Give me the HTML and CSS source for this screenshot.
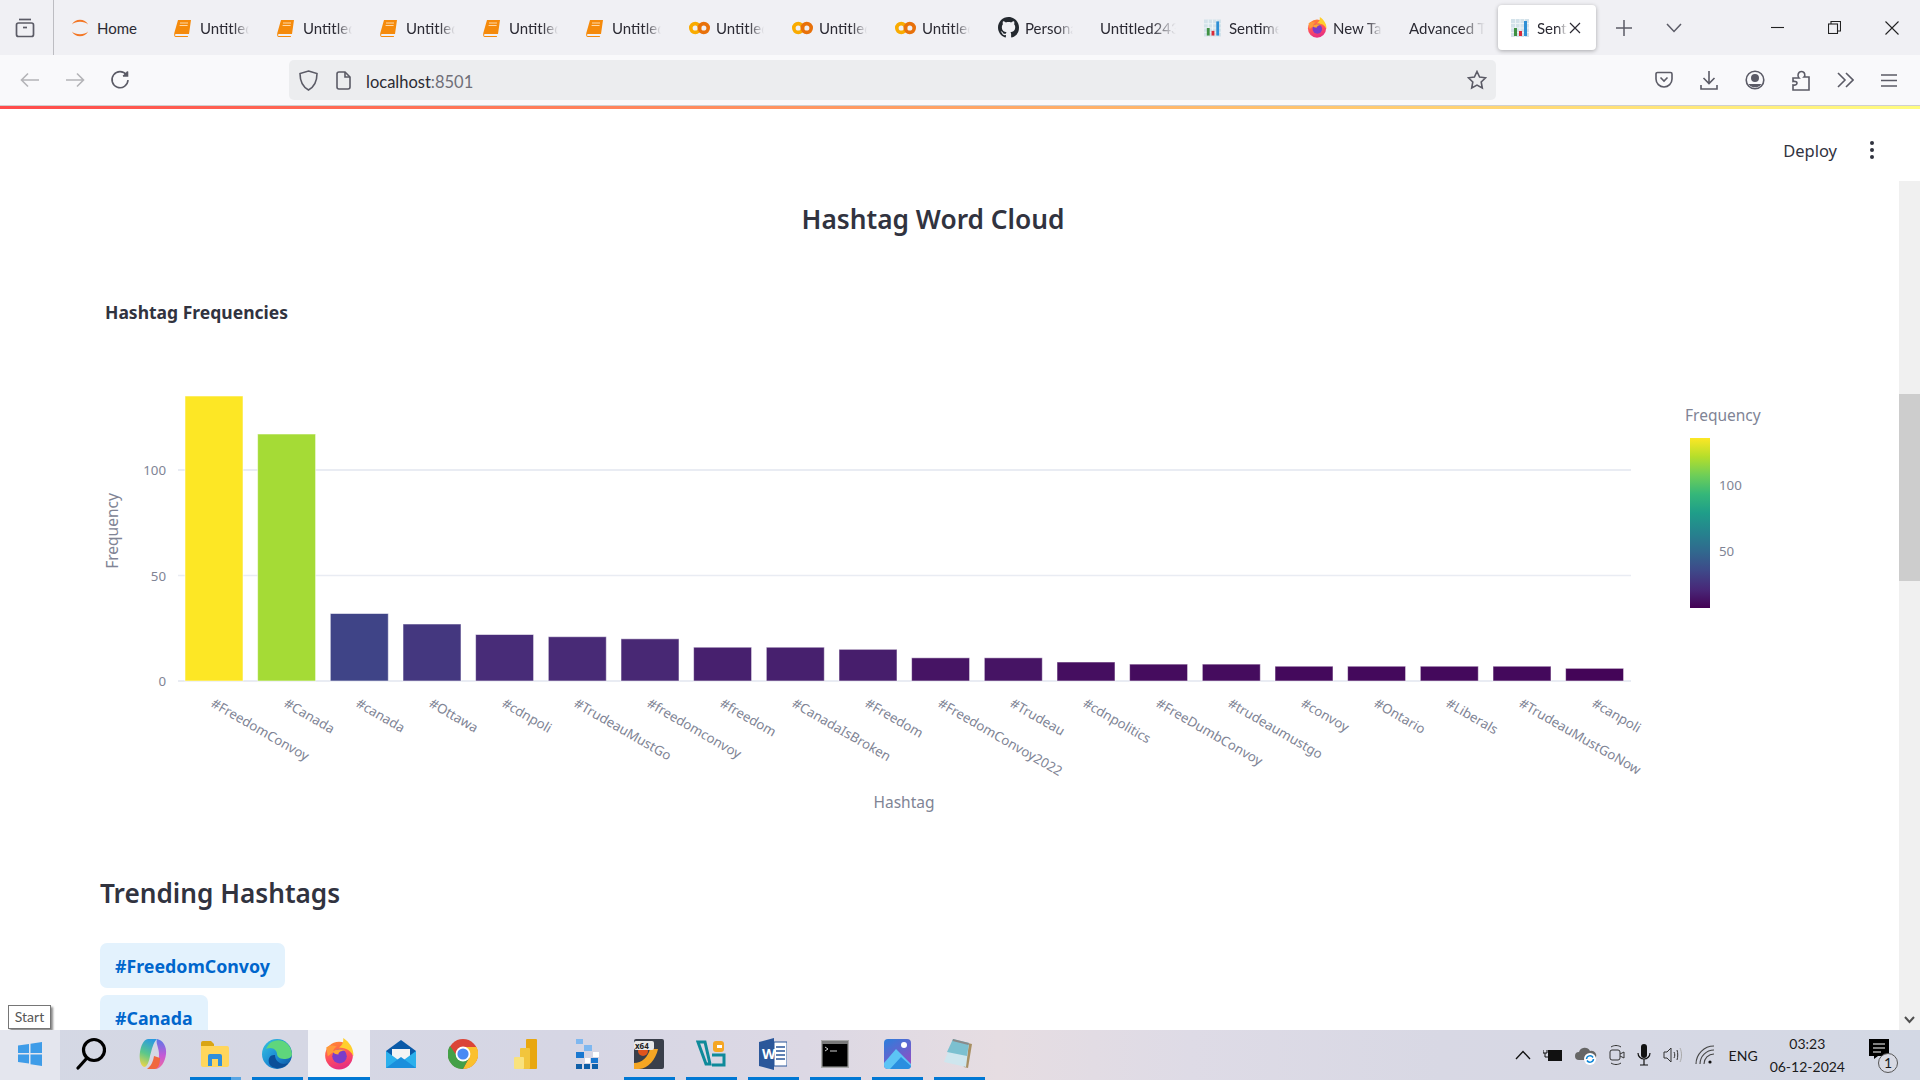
FILE: index.html
```html
<!DOCTYPE html>
<html lang="en">
<head>
    <meta charset="UTF-8">
    <title>Sentiment Dashboard</title>
    <link rel="stylesheet" href="styles.css">
</head>
<body>
    <svg class="sprite" xmlns="http://www.w3.org/2000/svg">
        <defs>
            <linearGradient id="viridis" x1="0" y1="1" x2="0" y2="0">
                <stop offset="0" stop-color="#440154"/>
                <stop offset="0.11" stop-color="#482878"/>
                <stop offset="0.22" stop-color="#3e4989"/>
                <stop offset="0.33" stop-color="#31688e"/>
                <stop offset="0.44" stop-color="#26828e"/>
                <stop offset="0.56" stop-color="#1f9e89"/>
                <stop offset="0.67" stop-color="#35b779"/>
                <stop offset="0.78" stop-color="#6ece58"/>
                <stop offset="0.89" stop-color="#b5de2b"/>
                <stop offset="1" stop-color="#fde725"/>
            </linearGradient>
            <linearGradient id="fxBody" x1="0" y1="0" x2="0.3" y2="1">
                <stop offset="0" stop-color="#ff8f2e"/>
                <stop offset="0.6" stop-color="#ff4f5e"/>
                <stop offset="1" stop-color="#e8307f"/>
            </linearGradient>
            <linearGradient id="edgeBody" x1="0" y1="0" x2="1" y2="1">
                <stop offset="0" stop-color="#36c5e0"/>
                <stop offset="0.55" stop-color="#1b8ad4"/>
                <stop offset="1" stop-color="#0c4f99"/>
            </linearGradient>
            <linearGradient id="copilotLeft" x1="0.6" y1="0" x2="0.3" y2="1">
                <stop offset="0" stop-color="#2a9ae0"/>
                <stop offset="0.55" stop-color="#5cc88a"/>
                <stop offset="1" stop-color="#e8d44a"/>
            </linearGradient>
            <linearGradient id="copilotRight" x1="0.5" y1="0" x2="0.5" y2="1">
                <stop offset="0" stop-color="#5a78e8"/>
                <stop offset="0.55" stop-color="#c45ad6"/>
                <stop offset="1" stop-color="#f0689e"/>
            </linearGradient>
            <linearGradient id="photoBody" x1="0" y1="0" x2="0.6" y2="1">
                <stop offset="0" stop-color="#2a7fdc"/>
                <stop offset="1" stop-color="#8f4fc4"/>
            </linearGradient>
        </defs>
        <symbol id="ic-home" viewBox="0 0 20 24">
            <path d="M1 8 C4 1 16 1 19 8 C15 4 5 4 1 8Z" fill="#f37726"/>
            <path d="M1 16 C4 23 16 23 19 16 C15 20 5 20 1 16Z" fill="#f37726"/>
        </symbol>
        <symbol id="ic-book" viewBox="0 0 18 18">
            <path d="M4 1 H17 L15 15 H2 C1 15 0.5 16 1.5 17 H14 L13.8 18 H2 C0 18 0 16 0.3 14Z" fill="#f58a0b"/>
            <path d="M6 4 H14 M5.6 6.5 H13.6" stroke="#ffd9a8" stroke-width="1"/>
        </symbol>
        <symbol id="ic-colab" viewBox="0 0 22 14">
            <circle cx="6.5" cy="7" r="4.6" fill="none" stroke="#f9ab00" stroke-width="3.8"/>
            <circle cx="15.5" cy="7" r="4.6" fill="none" stroke="#e8710a" stroke-width="3.8"/>
        </symbol>
        <symbol id="ic-github" viewBox="0 0 16 16">
            <path fill="#24292f" fill-rule="evenodd" d="M8 0C3.58 0 0 3.58 0 8c0 3.54 2.29 6.53 5.47 7.59.4.07.55-.17.55-.38 0-.19-.01-.82-.01-1.49-2.01.37-2.53-.49-2.69-.94-.09-.23-.48-.94-.82-1.13-.28-.15-.68-.52-.01-.53.63-.01 1.08.58 1.23.82.72 1.21 1.87.87 2.33.66.07-.52.28-.87.51-1.07-1.78-.2-3.64-.89-3.64-3.95 0-.87.31-1.59.82-2.15-.08-.2-.36-1.02.08-2.12 0 0 .67-.21 2.2.82.64-.18 1.32-.27 2-.27s1.36.09 2 .27c1.53-1.04 2.2-.82 2.2-.82.44 1.1.16 1.92.08 2.12.51.56.82 1.27.82 2.15 0 3.07-1.87 3.75-3.65 3.95.29.25.54.73.54 1.48 0 1.07-.01 1.93-.01 2.2 0 .21.15.46.55.38A8.01 8.01 0 0 0 16 8c0-4.42-3.58-8-8-8z"/>
        </symbol>
        <symbol id="ic-chart" viewBox="0 0 18 18">
            <rect width="18" height="18" fill="#d3e2ea"/>
            <path d="M0 4.5 H18 M0 9 H18 M0 13.5 H18 M4.5 0 V18 M9 0 V18 M13.5 0 V18" stroke="#eef4f7" stroke-width="1"/>
            <rect x="3" y="9" width="3" height="8" fill="#3f9142"/>
            <rect x="8" y="12" width="3" height="5" fill="#d92b3a"/>
            <rect x="13" y="2" width="3" height="15" fill="#2d8fd5"/>
        </symbol>
        <symbol id="ic-firefox" viewBox="0 0 28 30">
            <circle cx="14" cy="16.5" r="13" fill="url(#fxBody)"/>
            <path d="M18 0 C24 4 28 10 27.5 17 C24 10 19 9.5 14 9 C17 7 18.5 4 18 0Z" fill="#ffcf2d"/>
            <path d="M2 9 C5 6 9 7 12 8 C9 10 8 12 9 13 L3.5 17Z" fill="#ff9a3c"/>
            <circle cx="14.5" cy="17" r="6.8" fill="#7b3cc9"/>
            <path d="M8 13 C11 10 16 10 20 11.5 C16 12 13.5 13 13.5 15.5 C11 15.5 9 14.5 8 13Z" fill="#ffa531"/>
        </symbol>
    </svg>

    <header class="tabbar">
        <button class="tab-strip-btn">
            <svg width="20" height="21" viewBox="0 0 20 21" fill="none" stroke="#5b5b66" stroke-width="1.7"><path d="M4 2.5 H16"/><rect x="1.5" y="6" width="17" height="13.5" rx="2"/><path d="M8 10.5 H12"/></svg>
        </button>
        <div class="tabs">
            <div class="tab"><svg class="favicon" width="18" height="22"><use href="#ic-home"/></svg><span class="tab-title tab-home">Home</span></div>
            <div class="tab"><svg class="favicon" width="18" height="18"><use href="#ic-book"/></svg><span class="tab-title">Untitled</span></div>
            <div class="tab"><svg class="favicon" width="18" height="18"><use href="#ic-book"/></svg><span class="tab-title">Untitled</span></div>
            <div class="tab"><svg class="favicon" width="18" height="18"><use href="#ic-book"/></svg><span class="tab-title">Untitled</span></div>
            <div class="tab"><svg class="favicon" width="18" height="18"><use href="#ic-book"/></svg><span class="tab-title">Untitled</span></div>
            <div class="tab"><svg class="favicon" width="18" height="18"><use href="#ic-book"/></svg><span class="tab-title">Untitled</span></div>
            <div class="tab"><svg class="favicon favicon-wide" width="21" height="14"><use href="#ic-colab"/></svg><span class="tab-title">Untitled</span></div>
            <div class="tab"><svg class="favicon favicon-wide" width="21" height="14"><use href="#ic-colab"/></svg><span class="tab-title">Untitled</span></div>
            <div class="tab"><svg class="favicon favicon-wide" width="21" height="14"><use href="#ic-colab"/></svg><span class="tab-title">Untitled</span></div>
            <div class="tab"><svg class="favicon favicon-wide" width="21" height="21"><use href="#ic-github"/></svg><span class="tab-title">Personal</span></div>
            <div class="tab"><span class="tab-title tab-wide">Untitled243</span></div>
            <div class="tab"><svg class="favicon" width="17" height="20"><use href="#ic-chart"/></svg><span class="tab-title">Sentiment</span></div>
            <div class="tab"><svg class="favicon favicon-wide" width="20" height="21"><use href="#ic-firefox"/></svg><span class="tab-title">New Tab</span></div>
            <div class="tab"><span class="tab-title tab-wide">Advanced Text</span></div>
            <div class="tab tab-active">
                <svg class="favicon" width="18" height="20"><use href="#ic-chart"/></svg>
                <span class="tab-title tab-short">Sentiment</span>
                <svg class="tab-close" width="12" height="12" viewBox="0 0 12 12" stroke="#2b2a33" stroke-width="1.2"><path d="M1 1 L11 11 M11 1 L1 11"/></svg>
            </div>
        </div>
        <svg class="tab-new" width="16" height="16" viewBox="0 0 16 16" stroke="#5b5b66" stroke-width="1.5"><path d="M8 0 V16 M0 8 H16"/></svg>
        <svg class="tab-list" width="16" height="10" viewBox="0 0 16 10" fill="none" stroke="#5b5b66" stroke-width="1.5"><path d="M1 1 L8 8.5 L15 1"/></svg>
        <div class="window-btns">
            <svg width="13" height="13" viewBox="0 0 13 13" stroke="#222" stroke-width="1.1"><path d="M0 6.5 H13"/></svg>
            <svg width="13" height="13" viewBox="0 0 13 13" fill="none" stroke="#222" stroke-width="1.1"><rect x="0.5" y="3" width="9" height="9.5"/><path d="M3 3 V0.5 H12.5 V10 H9.5"/></svg>
            <svg width="14" height="14" viewBox="0 0 14 14" stroke="#222" stroke-width="1.1"><path d="M0.5 0.5 L13.5 13.5 M13.5 0.5 L0.5 13.5"/></svg>
        </div>
    </header>

    <nav class="toolbar">
        <div class="nav-btns">
            <svg width="20" height="16" viewBox="0 0 20 16" fill="none" stroke="#b4b4b8" stroke-width="1.6"><path d="M19 8 H2 M8 1.5 L1.5 8 L8 14.5"/></svg>
            <svg width="20" height="16" viewBox="0 0 20 16" fill="none" stroke="#b4b4b8" stroke-width="1.6"><path d="M1 8 H18 M12 1.5 L18.5 8 L12 14.5"/></svg>
            <svg width="20" height="20" viewBox="0 0 20 20" fill="none" stroke="#5b5b66" stroke-width="1.6"><path d="M16.5 5 A8 8 0 1 0 18 10"/><path d="M17.5 1 V6 H12.5" fill="#5b5b66" stroke="none"/><path d="M17.5 1.5 V6 H13"/></svg>
        </div>
        <div class="urlbar">
            <svg width="19" height="21" viewBox="0 0 19 21" fill="none" stroke="#5b5b66" stroke-width="1.6"><path d="M9.5 1 L18 3.5 C18 12 15 17 9.5 20 C4 17 1 12 1 3.5Z"/></svg>
            <svg class="url-page" width="15" height="19" viewBox="0 0 15 19" fill="none" stroke="#5b5b66" stroke-width="1.6"><path d="M3 1 H9 L14 6 V16 A2 2 0 0 1 12 18 H3 A2 2 0 0 1 1 16 V3 A2 2 0 0 1 3 1Z"/><path d="M9 1 V6 H14"/></svg>
            <span class="url-text">localhost<span class="url-port">:8501</span></span>
            <svg class="url-star" width="20" height="20" viewBox="0 0 20 20" fill="none" stroke="#5b5b66" stroke-width="1.6"><path d="M10 1.5 L12.6 7 L18.6 7.8 L14.2 12 L15.3 18 L10 15.1 L4.7 18 L5.8 12 L1.4 7.8 L7.4 7Z"/></svg>
        </div>
        <div class="tool-btns">
            <svg width="18" height="18" viewBox="0 0 18 18" fill="none" stroke="#5b5b66" stroke-width="1.6"><path d="M2.5 1.5 H15.5 A1.5 1.5 0 0 1 17 3 V8 A8 8 0 0 1 1 8 V3 A1.5 1.5 0 0 1 2.5 1.5Z"/><path d="M5.5 6.5 L9 10 L12.5 6.5"/></svg>
            <svg width="18" height="20" viewBox="0 0 18 20" fill="none" stroke="#5b5b66" stroke-width="1.6"><path d="M9 1 V13 M3.5 8 L9 13.5 L14.5 8 M1 15 V19 H17 V15"/></svg>
            <svg width="20" height="20" viewBox="0 0 20 20" fill="none" stroke="#5b5b66" stroke-width="1.6"><circle cx="10" cy="10" r="8.8"/><circle cx="10" cy="8" r="3.2" fill="#5b5b66"/><path d="M3.5 14 H16.5 A8 8 0 0 1 3.5 14Z" fill="#5b5b66" stroke="none"/></svg>
            <svg width="18" height="21" viewBox="0 0 18 21" fill="none" stroke="#5b5b66" stroke-width="1.6"><path d="M1 8 H7 C5 6 6 1.5 9.5 1.5 C13 1.5 13.5 5.5 12 7 H17 V20 H1 V15 C4 15.5 5 14 5 13 C5 12 4 11 1 11.5Z"/></svg>
            <svg width="17" height="16" viewBox="0 0 17 16" fill="none" stroke="#5b5b66" stroke-width="1.6"><path d="M1 1 L8 8 L1 15 M9 1 L16 8 L9 15"/></svg>
            <svg width="16" height="13" viewBox="0 0 16 13" stroke="#5b5b66" stroke-width="1.6"><path d="M0 1 H16 M0 6.5 H16 M0 12 H16"/></svg>
        </div>
    </nav>
    <div class="decoration"></div>

    <main class="viewport">
        <div class="page">
            <div class="app-header">
                <span class="deploy">Deploy</span>
                <span class="kebab"><i></i><i></i><i></i></span>
            </div>
            <h1 class="page-title">Hashtag Word Cloud</h1>
            <h4 class="chart-title">Hashtag Frequencies</h4>

            <svg class="chart" width="1666" height="500" viewBox="100 340 1666 500" xmlns="http://www.w3.org/2000/svg">
                <g stroke="#e9ecf3">
                    <path d="M178 470 H1631" stroke-width="2"/>
                    <path d="M178 575.5 H1631" stroke-width="1.5"/>
                    <path d="M178 681 H1631" stroke-width="2"/>
                </g>
                <g class="bars" stroke-width="1" stroke-opacity="0.55" stroke="#fff">
                    <rect x="185" y="396" width="58" height="285" fill="#fde725"/>
                    <rect x="257.6" y="434" width="58" height="247" fill="#a5db36"/>
                    <rect x="330.3" y="613.5" width="58" height="67.5" fill="#3f4487"/>
                    <rect x="403" y="624" width="58" height="57" fill="#44377f"/>
                    <rect x="475.6" y="634.5" width="58" height="46.5" fill="#482c78"/>
                    <rect x="548.3" y="636.7" width="58" height="44.3" fill="#482a76"/>
                    <rect x="621" y="638.8" width="58" height="42.2" fill="#482874"/>
                    <rect x="693.6" y="647.2" width="58" height="33.8" fill="#47206e"/>
                    <rect x="766.3" y="647.2" width="58" height="33.8" fill="#47206e"/>
                    <rect x="839" y="649.3" width="58" height="31.7" fill="#471e6c"/>
                    <rect x="911.6" y="657.8" width="58" height="23.2" fill="#461464"/>
                    <rect x="984.3" y="657.8" width="58" height="23.2" fill="#461464"/>
                    <rect x="1057" y="662" width="58" height="19" fill="#450e60"/>
                    <rect x="1129.6" y="664.1" width="58" height="16.9" fill="#450c5e"/>
                    <rect x="1202.3" y="664.1" width="58" height="16.9" fill="#450c5e"/>
                    <rect x="1275" y="666.2" width="58" height="14.8" fill="#44095c"/>
                    <rect x="1347.6" y="666.2" width="58" height="14.8" fill="#44095c"/>
                    <rect x="1420.3" y="666.2" width="58" height="14.8" fill="#44095c"/>
                    <rect x="1493" y="666.2" width="58" height="14.8" fill="#44095c"/>
                    <rect x="1565.6" y="668.3" width="58" height="12.7" fill="#440558"/>
                </g>
                <g class="tick">
                    <text x="166" y="475" text-anchor="end">100</text>
                    <text x="166" y="581" text-anchor="end">50</text>
                    <text x="166" y="686" text-anchor="end">0</text>
                </g>
                <g class="tick">
                    <text x="210" y="706" transform="rotate(30 210 706)">#FreedomConvoy</text>
                    <text x="283" y="706" transform="rotate(30 283 706)">#Canada</text>
                    <text x="355" y="706" transform="rotate(30 355 706)">#canada</text>
                    <text x="428" y="706" transform="rotate(30 428 706)">#Ottawa</text>
                    <text x="501" y="706" transform="rotate(30 501 706)">#cdnpoli</text>
                    <text x="573" y="706" transform="rotate(30 573 706)">#TrudeauMustGo</text>
                    <text x="646" y="706" transform="rotate(30 646 706)">#freedomconvoy</text>
                    <text x="719" y="706" transform="rotate(30 719 706)">#freedom</text>
                    <text x="791" y="706" transform="rotate(30 791 706)">#CanadaIsBroken</text>
                    <text x="864" y="706" transform="rotate(30 864 706)">#Freedom</text>
                    <text x="937" y="706" transform="rotate(30 937 706)">#FreedomConvoy2022</text>
                    <text x="1009" y="706" transform="rotate(30 1009 706)">#Trudeau</text>
                    <text x="1082" y="706" transform="rotate(30 1082 706)">#cdnpolitics</text>
                    <text x="1155" y="706" transform="rotate(30 1155 706)">#FreeDumbConvoy</text>
                    <text x="1227" y="706" transform="rotate(30 1227 706)">#trudeaumustgo</text>
                    <text x="1300" y="706" transform="rotate(30 1300 706)">#convoy</text>
                    <text x="1373" y="706" transform="rotate(30 1373 706)">#Ontario</text>
                    <text x="1445" y="706" transform="rotate(30 1445 706)">#Liberals</text>
                    <text x="1518" y="706" transform="rotate(30 1518 706)">#TrudeauMustGoNow</text>
                    <text x="1591" y="706" transform="rotate(30 1591 706)">#canpoli</text>
                </g>
                <text class="axis-title" x="118" y="531" text-anchor="middle" transform="rotate(-90 118 531)">Frequency</text>
                <text class="axis-title" x="904" y="808" text-anchor="middle">Hashtag</text>
                <text class="axis-title" x="1685" y="421">Frequency</text>
                <rect x="1690" y="438" width="20" height="170" fill="url(#viridis)"/>
                <text class="tick" x="1719" y="490">100</text>
                <text class="tick" x="1719" y="556">50</text>
            </svg>

            <h2 class="section-title">Trending Hashtags</h2>
            <div class="hashtags">
                <span class="hashtag">#FreedomConvoy</span>
                <span class="hashtag">#Canada</span>
            </div>
        </div>
        <div class="scrollbar">
            <div class="thumb"></div>
            <svg class="scroll-down" width="11" height="8" viewBox="0 0 11 8" fill="none" stroke="#505050" stroke-width="2"><path d="M1 1 L5.5 6 L10 1"/></svg>
        </div>
        <div class="start-tip">Start</div>
    </main>

    <footer class="taskbar">
        <div class="task task-start">
            <svg width="24" height="24" viewBox="0 0 24 24" fill="#3e9ce8"><path d="M0 3.5 L11 2 V11 H0Z M12.5 1.8 L24 0 V11 H12.5Z M0 12.5 H11 V21.5 L0 20Z M12.5 12.5 H24 V24 L12.5 22.2Z"/></svg>
        </div>
        <div class="task">
            <svg width="30" height="34" viewBox="0 0 30 34" fill="none" stroke="#000" stroke-width="3.2" stroke-linecap="round"><circle cx="18" cy="13" r="10.5"/><path d="M11 21 L2 31"/></svg>
        </div>
        <div class="task">
            <svg width="28" height="32" viewBox="0 0 28 32"><path d="M9 1 H18 C14 5 13 11 11 18 C10 24 8 29 5 29 C1 27 0 20 1 14 C2 8 4 2 9 1Z" fill="url(#copilotLeft)"/><path d="M18 1 C24 2 28 9 27 16 C26 24 22 31 16 31 C20 26 21 16 19 10 C18 6 17 4 18 1Z" fill="url(#copilotRight)"/><path d="M16 31 C20 30 21 25 21 20 L15 18 C14 24 12 28 8 31Z" fill="#f0683e"/></svg>
        </div>
        <div class="task task-open">
            <svg width="28" height="26" viewBox="0 0 28 26"><path d="M0 2 A2 2 0 0 1 2 0 H10 L13 3 V8 H0Z" fill="#d9a514"/><path d="M0 5 H26 A2 2 0 0 1 28 7 V24 A2 2 0 0 1 26 26 H2 A2 2 0 0 1 0 24Z" fill="#ffd65c"/><path d="M7 25 V15 A2 2 0 0 1 9 13 H19 A2 2 0 0 1 21 15 V25 H17 V18 H11 V25Z" fill="#2f8fdc"/></svg>
            <i class="run-bar run-bar-multi"></i>
        </div>
        <div class="task task-open">
            <svg width="30" height="30" viewBox="0 0 30 30"><circle cx="15" cy="15" r="15" fill="url(#edgeBody)"/><path d="M8 4 C16 -2 29 2 30 15 C30 19 26 20 22 20 C17 20 15 17 15 15 C15 11 10 7 4 10 C5 8 6 6 8 4Z" fill="#5fd67c"/><path d="M13 16 C13 22 19 27 26 24 C23 29 14 31 9 27 C5 24 6 15 13 16Z" fill="#0c4f99"/></svg>
            <i class="run-bar"></i>
        </div>
        <div class="task task-open task-active">
            <svg width="30" height="32" viewBox="0 0 28 30"><use href="#ic-firefox"/></svg>
            <i class="run-bar"></i>
        </div>
        <div class="task">
            <svg width="30" height="28" viewBox="0 0 30 28"><path d="M15 0 L30 11 V28 H0 V11Z" fill="#0a5aa8"/><path d="M6 9 H24 V18 L15 22 L6 18Z" fill="#f4f4f4"/><path d="M0 11 L15 22 L30 11 V28 H0Z" fill="#2cb0ec"/><path d="M0 28 L15 17 L30 28Z" fill="#1b8fdc"/></svg>
        </div>
        <div class="task">
            <svg width="30" height="30" viewBox="0 0 30 30"><circle cx="15" cy="15" r="15" fill="#db4437"/><path d="M15 8 H28.5 A15 15 0 0 1 15 30 L21 19Z" fill="#fbc02d"/><path d="M2 7 A15 15 0 0 0 15 30 L21 19 L15 22 L9 17Z" fill="#43a047"/><circle cx="15" cy="15" r="7.4" fill="#fff"/><circle cx="15" cy="15" r="5.6" fill="#4a8af4"/></svg>
        </div>
        <div class="task">
            <svg width="23" height="30" viewBox="0 0 23 30"><rect x="12" y="0" width="11" height="30" rx="1" fill="#e8a70f"/><rect x="6" y="9" width="10" height="21" rx="1" fill="#f2c53c"/><rect x="0" y="18" width="10" height="12" rx="1" fill="#f9e27d"/></svg>
        </div>
        <div class="task">
            <svg width="26" height="30" viewBox="0 0 26 30"><g fill="#7fb8f0"><rect x="2" y="0" width="7" height="5"/><rect x="10" y="6" width="8" height="6"/></g><g fill="#1a78d0"><rect x="2" y="13" width="8" height="6"/><rect x="17" y="19" width="7" height="5"/></g><g fill="#fff"><rect x="19" y="13" width="6" height="5"/><rect x="11" y="19" width="5" height="5"/></g><g fill="#0f5fa8"><rect x="2" y="25" width="6" height="5"/><rect x="10" y="25" width="6" height="5"/><rect x="18" y="25" width="6" height="5"/></g></svg>
        </div>
        <div class="task task-open">
            <svg width="30" height="30" viewBox="0 0 30 30"><rect width="30" height="30" rx="2" fill="#3a3f4a"/><path d="M0 24 C8 24 14 18 16 10 H24 C22 20 14 30 5 30 H0Z" fill="#f5a623"/><circle cx="9" cy="12" r="5" fill="#e0541c"/><rect x="0" y="2" width="20" height="9" rx="2" fill="#e8e8e8"/><text class="x264" x="1" y="9.5">x64</text></svg>
            <i class="run-bar"></i>
        </div>
        <div class="task task-open">
            <svg width="30" height="30" viewBox="0 0 30 30" fill="none"><path d="M2 3 H9 L14 25 H10 Z" stroke="#0f8a9a" stroke-width="3"/><path d="M16 16 H28 V26 H16" stroke="#0f8a9a" stroke-width="3"/><rect x="17" y="2" width="11" height="11" rx="3" fill="#f5a623"/><rect x="21" y="6" width="5" height="3" fill="#fff"/></svg>
            <i class="run-bar"></i>
        </div>
        <div class="task task-open">
            <svg width="28" height="32" viewBox="0 0 28 32"><path d="M15 0 V32 L0 28 V4Z" fill="#2b579a"/><rect x="15" y="4" width="13" height="24" fill="#fff" stroke="#2b579a"/><path d="M17 9 H26 M17 13 H26 M17 17 H26 M17 21 H26" stroke="#2b579a" stroke-width="1.4"/><text class="word" x="3" y="21">W</text></svg>
            <i class="run-bar"></i>
        </div>
        <div class="task task-open">
            <svg width="28" height="28" viewBox="0 0 28 28"><rect width="28" height="28" fill="#a8a8a8"/><rect x="1" y="1" width="26" height="3" fill="#7a7a7a"/><rect x="1.5" y="4" width="25" height="22.5" fill="#000"/><path d="M4 7 L7 9 L4 11 M9 11 H16" stroke="#d0d0d0" stroke-width="1" fill="none"/></svg>
            <i class="run-bar"></i>
        </div>
        <div class="task task-open">
            <svg width="27" height="30" viewBox="0 0 27 30"><rect width="27" height="30" rx="4" fill="url(#photoBody)"/><circle cx="20" cy="6" r="3" fill="#fff"/><path d="M0 24 L12 10 L27 25 V26 A4 4 0 0 1 23 30 H4 A4 4 0 0 1 0 26Z" fill="#5cc4f5"/><path d="M6 30 L17 18 L27 27 A4 4 0 0 1 23 30Z" fill="#2a8fe0"/></svg>
            <i class="run-bar"></i>
        </div>
        <div class="task task-open">
            <svg width="30" height="32" viewBox="0 0 30 32"><path d="M10 2 L28 6 L24 30 L20 29Z" fill="#a88f62"/><path d="M9 1 L25 5 L22 29 L0 24Z" fill="#cfe6ee"/><path d="M9 1 L25 5 L23 18 L3 14Z" fill="#7cc0d0"/><path d="M9 1 L25 5 L24.5 7 L8.5 3Z" fill="#8a8a8a"/></svg>
            <i class="run-bar"></i>
        </div>

        <div class="tray">
            <svg width="16" height="10" viewBox="0 0 16 10" fill="none" stroke="#111" stroke-width="1.3"><path d="M1 9 L8 1.5 L15 9"/></svg>
            <svg width="20" height="14" viewBox="0 0 20 14"><rect x="5" y="2" width="14" height="11" fill="#111"/><path d="M0 2 V5 H4 V2 M2 5 V9 H5" stroke="#111" fill="none"/></svg>
            <svg width="22" height="20" viewBox="0 0 22 20"><path d="M4 15 A4 4 0 0 1 4 7 A6 6 0 0 1 15 6 A4.5 4.5 0 0 1 18 15Z" fill="#666"/><circle cx="15" cy="14" r="6" fill="#fff"/><path d="M11.5 14 A3.5 3.5 0 0 1 18 12.5 M18.5 14 A3.5 3.5 0 0 1 12 15.5" stroke="#0a84d8" stroke-width="1.5" fill="none"/></svg>
            <svg width="16" height="20" viewBox="0 0 16 20" fill="none" stroke="#333" stroke-width="1"><rect x="1" y="5" width="10" height="10" rx="2"/><path d="M11 9 L15 7 V13 L11 11 M2 2 C5 0 9 0 12 2 M2 18 C5 20 9 20 12 18"/></svg>
            <svg width="14" height="22" viewBox="0 0 14 22" fill="none"><rect x="4" y="0" width="6" height="14" rx="3" fill="#111"/><path d="M1 9 A6 6 0 0 0 13 9 M7 15 V21 M3 21 H11" stroke="#111" stroke-width="1.2"/></svg>
            <svg width="20" height="18" viewBox="0 0 20 18" fill="none" stroke="#333" stroke-width="1"><path d="M1 6 H4 L8 2 V16 L4 12 H1Z M11 6 C12 8 12 10 11 12 M14 4 C15 7 15 11 14 14"/><path d="M17 2 C19 6 19 12 17 16" stroke="#aaa"/></svg>
            <svg width="20" height="20" viewBox="0 0 20 20" fill="none" stroke="#444" stroke-width="1.1"><path d="M1 19 A18 18 0 0 1 19 1 M5 19 A14 14 0 0 1 19 5 M9 19 A10 10 0 0 1 19 9"/><circle cx="15" cy="17" r="1.6" fill="#111" stroke="none"/></svg>
            <span class="tray-lang">ENG</span>
            <div class="tray-clock"><span>03:23</span><span>06-12-2024</span></div>
            <div class="tray-notify">
                <svg width="20" height="20" viewBox="0 0 20 20"><path d="M0 0 H20 V17 H9 L5 20 V17 H0Z" fill="#000"/><path d="M4 5 H16 M4 9 H16 M4 13 H12" stroke="#fff" stroke-width="1.1"/></svg>
                <span class="notify-count">1</span>
            </div>
        </div>
    </footer>
</body>
</html>
```

FILE: styles.css
```css
* {
    margin: 0;
    padding: 0;
    box-sizing: border-box;
}

html, body {
    height: 100%;
    overflow: hidden;
}

body {
    width: 1920px;
    height: 1080px;
    display: flex;
    flex-direction: column;
    background: #fff;
    color: #31333f;
    font-family: 'Noto Sans', sans-serif;
}

.sprite {
    display: block;
    width: 0;
    height: 0;
}

/* browser chrome */
.tabbar {
    height: 55px;
    flex: none;
    display: flex;
    align-items: center;
    background: #f0f0f4;
}

.tab-strip-btn {
    width: 54px;
    height: 55px;
    flex: none;
    display: flex;
    align-items: center;
    justify-content: center;
    padding-right: 4px;
    background: none;
    border: none;
    border-right: 1px solid #bdbdc2;
}

.tabs {
    display: flex;
    padding-left: 2px;
}

.tab {
    width: 103px;
    height: 45px;
    flex: none;
    display: flex;
    align-items: center;
    gap: 8px;
    padding: 0 13px 0 15px;
    font-family: 'Lato', sans-serif;
    font-size: 15px;
    color: #2b2a33;
}

.favicon-wide {
    margin-right: -2px;
}

.tab-title {
    flex: 1;
    min-width: 0;
    overflow: hidden;
    white-space: nowrap;
    -webkit-mask-image: linear-gradient(90deg, #000 68%, transparent 100%);
    mask-image: linear-gradient(90deg, #000 68%, transparent 100%);
}

.tab-home {
    -webkit-mask-image: none;
    mask-image: none;
}

.tab-wide {
    margin-left: -1px;
}

.tab-active {
    position: relative;
    width: 98px;
    gap: 8px;
    padding-left: 13px;
    background: #fff;
    border-radius: 4px;
    box-shadow: 0 1px 4px rgba(0, 0, 0, 0.3);
}

.tab-short {
    flex: none;
    width: 30px;
}

.tab-close {
    flex: none;
    margin-left: -6px;
}

.tab-new {
    margin-left: 20px;
    flex: none;
}

.tab-list {
    margin-left: 34px;
    flex: none;
}

.window-btns {
    margin-left: auto;
    display: flex;
    align-items: center;
    gap: 44px;
    padding-right: 21px;
}

.toolbar {
    height: 50px;
    flex: none;
    display: flex;
    align-items: center;
    background: #f9f9fb;
}

.nav-btns {
    width: 289px;
    flex: none;
    display: flex;
    align-items: center;
    gap: 25px;
    padding-left: 20px;
}

.urlbar {
    width: 1207px;
    height: 40px;
    flex: none;
    display: flex;
    align-items: center;
    padding: 0 9px 0 10px;
    background: #ecedef;
    border-radius: 5px;
    font-family: 'Lato', sans-serif;
    font-size: 16.5px;
    color: #2b2a33;
}

.url-page {
    margin-left: 18px;
}

.url-text {
    margin-left: 15px;
    margin-top: 3px;
}

.url-port {
    color: #6f6f78;
}

.url-star {
    margin-left: auto;
}

.tool-btns {
    flex: 1;
    display: flex;
    align-items: center;
    justify-content: flex-end;
    gap: 27px;
    padding-right: 23px;
}

.decoration {
    height: 4px;
    flex: none;
    border-top: 1px solid #d0d0d0;
    background: linear-gradient(90deg, #ff4b4b, #fffd80);
    background-clip: padding-box;
}

/* streamlit page */
.viewport {
    position: relative;
    flex: 1;
    min-height: 0;
    display: flex;
}

.page {
    flex: 1;
    min-width: 0;
    overflow: hidden;
    padding: 0 133px 0 100px;
}

.app-header {
    height: 82px;
    margin-bottom: 2px;
    margin-right: -108px;
    display: flex;
    align-items: center;
    justify-content: flex-end;
    gap: 33px;
}

.deploy {
    font-size: 16.5px;
}

.kebab {
    display: flex;
    flex-direction: column;
    gap: 3px;
}

.kebab i {
    width: 4px;
    height: 4px;
    border-radius: 50%;
    background: #31333f;
}

.page-title {
    height: 50px;
    line-height: 52px;
    text-align: center;
    font-size: 26.3px;
    font-weight: 600;
}

.chart-title {
    height: 26px;
    margin-top: 56px;
    margin-left: 5px;
    line-height: 26px;
    font-size: 17.5px;
    font-weight: 700;
}

.chart {
    display: block;
    margin-top: 15px;
}

.tick text, text.tick {
    font-size: 13.3px;
    fill: #808495;
}

.axis-title {
    font-size: 15.5px;
    fill: #808495;
}

.x264 {
    font-size: 8px;
    font-weight: 700;
    fill: #222;
}

.word {
    font-size: 14px;
    font-weight: 700;
    fill: #fff;
}

.section-title {
    height: 40px;
    margin-top: 33px;
    line-height: 40px;
    font-size: 26.2px;
    font-weight: 600;
}

.hashtags {
    margin-top: 30px;
    display: flex;
    flex-direction: column;
    align-items: flex-start;
    gap: 7px;
}

.hashtag {
    height: 45px;
    padding: 0 15px;
    line-height: 46px;
    background: #e3f2fd;
    border-radius: 7px;
    font-size: 17.8px;
    font-weight: 700;
    color: #0066cc;
}

.scrollbar {
    position: relative;
    width: 21px;
    flex: none;
    margin-top: 72px;
    padding-top: 213px;
    background: #f0f0f0;
}

.thumb {
    height: 187px;
    background: #cdcdcd;
}

.scroll-down {
    position: absolute;
    left: 5px;
    bottom: 6px;
}

.start-tip {
    position: absolute;
    left: 8px;
    bottom: 1px;
    width: 43px;
    height: 24px;
    line-height: 22px;
    text-align: center;
    background: #fff;
    border: 1px solid #767676;
    box-shadow: 2px 2px 2px #8c8c8c;
    font-family: 'Lato', sans-serif;
    font-size: 14px;
    color: #575757;
}

/* windows taskbar */
.taskbar {
    height: 50px;
    flex: none;
    display: flex;
    align-items: center;
    background: linear-gradient(90deg, #d4d8e4 0%, #d6d6e4 30%, #dcd8e4 42%, #e6dde2 52%, #dedbe6 62%, #d8d8e4 75%, #d3d8e4 100%);
}

.task {
    position: relative;
    width: 62px;
    height: 50px;
    flex: none;
    display: flex;
    align-items: center;
    justify-content: center;
    padding-bottom: 2px;
}

.task-start {
    width: 60px;
    background: #e4e6ee;
}

.task-active {
    background: #f4f5f9;
}

.run-bar {
    position: absolute;
    left: 6px;
    right: 5px;
    bottom: 0;
    height: 3px;
    background: #0078d4;
}

.task-active .run-bar {
    left: 0;
    right: 0;
}

.run-bar-multi {
    background: linear-gradient(90deg, #0078d4 80%, #58a6e4 80%);
}

.tray {
    flex: 1;
    display: flex;
    align-items: center;
    justify-content: flex-end;
    gap: 12px;
    padding-right: 31px;
    font-family: 'Lato', sans-serif;
    color: #1a1a1a;
}

.tray-lang {
    margin-left: 2px;
    font-size: 14px;
}

.tray-clock {
    display: flex;
    flex-direction: column;
    align-items: center;
    gap: 7px;
    margin-left: 0;
    font-size: 14px;
    line-height: 16px;
}

.tray-notify {
    position: relative;
    width: 20px;
    height: 32px;
    margin-left: 12px;
}

.notify-count {
    position: absolute;
    left: 9px;
    top: 14px;
    width: 20px;
    height: 20px;
    border-radius: 50%;
    border: 1px solid #555;
    background: #d8dae4;
    line-height: 18px;
    text-align: center;
    font-size: 14px;
}
```
